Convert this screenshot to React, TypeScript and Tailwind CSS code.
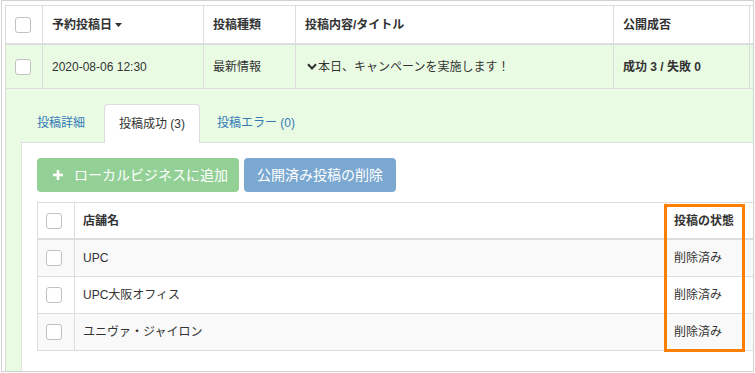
import type { ReactNode } from "react";

function Checkbox() {
  return <span className="block w-4 h-4 rounded-[3px] border border-[#c2c2c2] bg-white" />;
}

function Cell({ children, className = "" }: { children?: ReactNode; className?: string }) {
  return (
    <div className={`flex items-center border-l border-[#ddd] pl-[9px] whitespace-nowrap ${className}`}>
      {children}
    </div>
  );
}

function InnerCell({ children }: { children?: ReactNode }) {
  return (
    <div className="flex items-center border-l border-[#ddd] pl-[8px] whitespace-nowrap">{children}</div>
  );
}

const stores = [
  { name: "UPC", status: "削除済み" },
  { name: "UPC大阪オフィス", status: "削除済み" },
  { name: "ユニヴァ・ジャイロン", status: "削除済み" },
];

export default function App() {
  return (
    <div className="relative w-[755px] h-[373px] bg-white text-[12px] leading-none text-[#333] font-['Liberation_Sans','Noto_Sans_CJK_JP',sans-serif]">
      <div className="ml-[1px] w-[753px] h-[372px] border border-[#d3d3d3] overflow-hidden pl-[3px] pt-[4px]">
        <div className="w-[900px]">
          {/* posts table header */}
          <div className="grid grid-cols-[37px_161px_92px_318px_136px_156px] h-[40px] border-t border-b-2 border-[#ddd] font-bold">
            <Cell>
              <Checkbox />
            </Cell>
            <Cell>
              予約投稿日
              <svg width="7" height="4" viewBox="0 0 7 4" className="ml-[3px]">
                <path d="M0 0 L7 0 L3.5 4 Z" fill="#333" />
              </svg>
            </Cell>
            <Cell>投稿種類</Cell>
            <Cell>投稿内容/タイトル</Cell>
            <Cell>公開成否</Cell>
            <Cell />
          </div>

          {/* expanded post row */}
          <div className="grid grid-cols-[37px_161px_92px_318px_136px_156px] h-[44px] border-b border-[#ddd] bg-[#eafbe3]">
            <Cell>
              <Checkbox />
            </Cell>
            <Cell>2020-08-06 12:30</Cell>
            <Cell>最新情報</Cell>
            <Cell>
              <svg width="10" height="7" viewBox="0 0 10 7" className="ml-[2px] mr-[1px]">
                <path d="M1 1.2 L5 5.4 L9 1.2" fill="none" stroke="#333" strokeWidth="2.2" />
              </svg>
              本日、キャンペーンを実施します！
            </Cell>
            <Cell className="font-bold">成功 3 / 失敗 0</Cell>
            <Cell />
          </div>

          {/* detail */}
          <div className="border-l border-[#ddd] bg-[#eafbe3] pl-[15px] pt-[15px] pb-[15px]">
            <div className="flex items-start pl-[1px]">
              <div className="flex items-center h-[38px] px-[15px] mr-[4px] text-[#337ab7]">投稿詳細</div>
              <div className="relative z-10 flex items-center h-[39px] px-[14px] mr-[2px] border border-b-0 border-[#ddd] bg-white rounded-t-[4px]">
                投稿成功 (3)
              </div>
              <div className="flex items-center h-[38px] px-[15px] text-[#337ab7]">投稿エラー (0)</div>
            </div>

            <div className="-mt-px border border-[#ddd] bg-white p-[15px] pb-[40px]">
              <div className="flex gap-[5px]">
                <button className="flex items-center h-[34px] pl-[16px] pr-[11px] rounded-[4px] bg-[#92d095] text-white text-[14px]">
                  <svg width="10" height="10" viewBox="0 0 10 10" className="mr-[11px]">
                    <rect x="0" y="3.7" width="10" height="2.6" fill="#fff" />
                    <rect x="3.7" y="0" width="2.6" height="10" fill="#fff" />
                  </svg>
                  ローカルビジネスに追加
                </button>
                <button className="flex items-center h-[34px] px-[13px] rounded-[4px] bg-[#7aa8d0] text-white text-[14px]">
                  公開済み投稿の削除
                </button>
              </div>

              <div className="mt-[10px]">
                <div className="grid grid-cols-[37px_591px_1fr] h-[38px] border-t border-b-2 border-[#ddd] font-bold">
                  <InnerCell>
                    <Checkbox />
                  </InnerCell>
                  <InnerCell>店舗名</InnerCell>
                  <InnerCell>投稿の状態</InnerCell>
                </div>
                {stores.map((s, i) => (
                  <div
                    key={s.name}
                    className={`grid grid-cols-[37px_591px_1fr] h-[37px] border-b border-[#ddd] ${
                      i % 2 === 0 ? "bg-[#f9f9f9]" : "bg-white"
                    }`}
                  >
                    <InnerCell>
                      <Checkbox />
                    </InnerCell>
                    <InnerCell>{s.name}</InnerCell>
                    <InnerCell>{s.status}</InnerCell>
                  </div>
                ))}
              </div>
            </div>
          </div>
        </div>
      </div>

      {/* highlight annotation */}
      <div className="absolute left-[664px] top-[204px] w-[81px] h-[148px] border-[3px] border-[#ff7f00]" />
    </div>
  );
}
